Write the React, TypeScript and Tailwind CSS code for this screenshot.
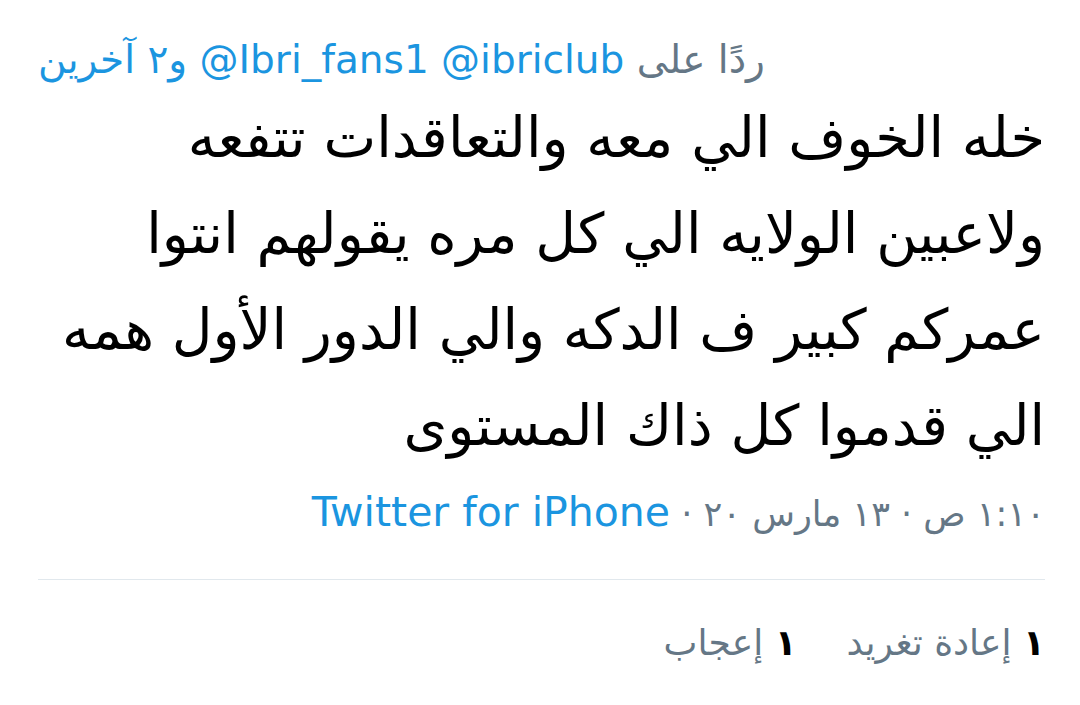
const arabic = "font-['DejaVu_Sans','Noto_Sans',sans-serif]";

export default function App() {
  return (
    <div dir="rtl" className={`min-h-[705px] w-[1080px] bg-white pl-[38px] pr-[35px] pt-[30px] ${arabic}`}>
      <p className="text-left text-[39px] leading-[60px] text-[#657786]">
        ردًا على{" "}
        <span className="text-[#1b95e0]">
          <span dir="ltr">@ibriclub</span> <span dir="ltr">@Ibri_fans1</span> و٢ آخرين
        </span>
      </p>

      <p className="text-[56px] leading-[96px] text-black">
        خله الخوف الي معه والتعاقدات تتفعه
        <br />
        ولاعبين الولايه الي كل مره يقولهم انتوا
        <br />
        عمركم كبير ف الدكه والي الدور الأول همه
        <br />
        الي قدموا كل ذاك المستوى
      </p>

      <p className="mt-[8px] text-[35px] leading-[60px] text-[#657786]">
        ١:١٠ ص · ١٣ مارس ٢٠ ·{" "}
        <span dir="ltr" className="text-[41px] text-[#1b95e0]">
          Twitter for iPhone
        </span>
      </p>

      <div className="mt-[35px] border-t border-[#e1e8ed]" />

      <div className="flex gap-[50px] pt-[33px] text-[36px] leading-[60px] text-[#657786]">
        <span>
          <span className="font-bold text-black">١</span> إعادة تغريد
        </span>
        <span>
          <span className="font-bold text-black">١</span> إعجاب
        </span>
      </div>
    </div>
  );
}
